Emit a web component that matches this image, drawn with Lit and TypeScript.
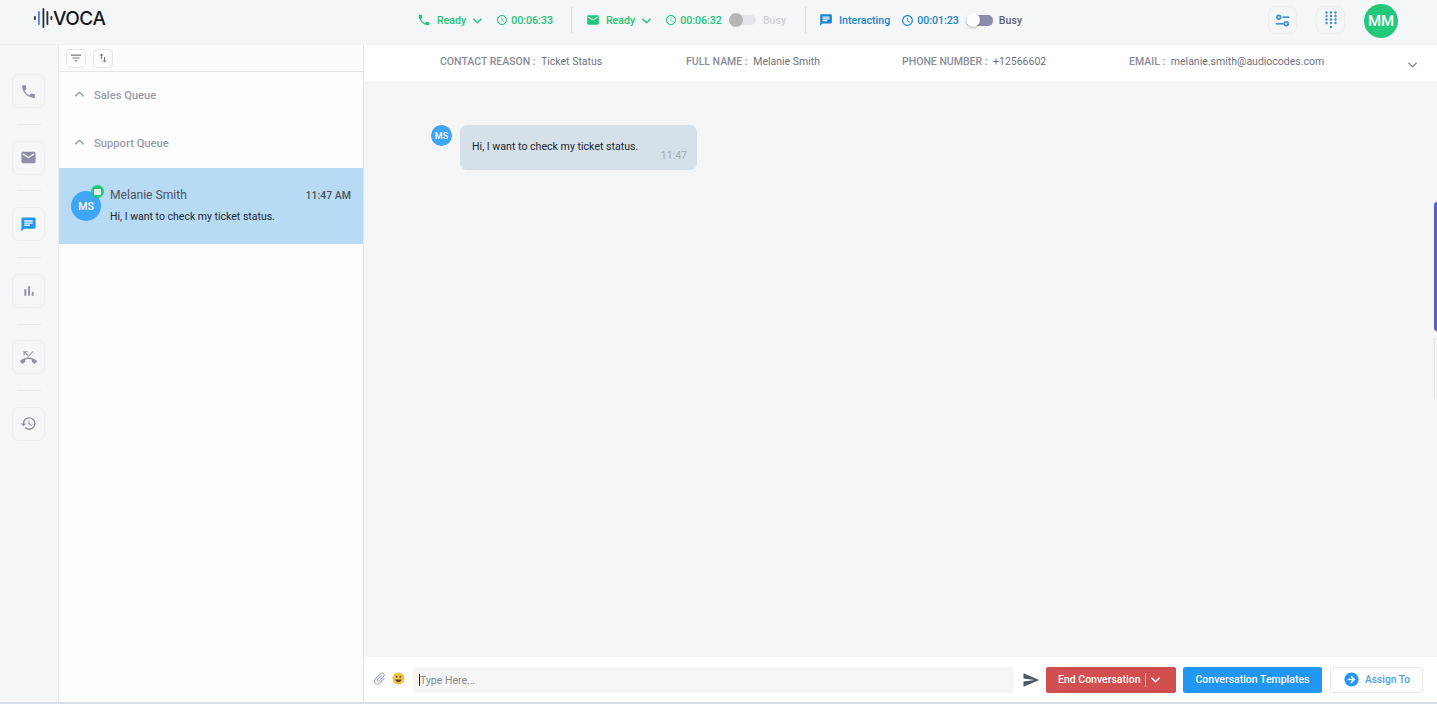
import { LitElement, css, html, svg } from 'lit'
import { customElement } from 'lit/decorators.js'

const icons = {
  phone: 'M6.62 10.79c1.44 2.83 3.76 5.14 6.59 6.59l2.2-2.2c.27-.27.67-.36 1.02-.24 1.12.37 2.33.57 3.57.57.55 0 1 .45 1 1V20c0 .55-.45 1-1 1-9.39 0-17-7.61-17-17 0-.55.45-1 1-1h3.5c.55 0 1 .45 1 1 0 1.25.2 2.45.57 3.57.11.35.03.74-.25 1.02l-2.2 2.2z',
  mail: 'M20 4H4c-1.1 0-1.99.9-1.99 2L2 18c0 1.1.9 2 2 2h16c1.1 0 2-.9 2-2V6c0-1.1-.9-2-2-2zm0 4l-8 5-8-5V6l8 5 8-5v2z',
  chat: 'M20 2H4c-1.1 0-1.99.9-1.99 2L2 22l4-4h14c1.1 0 2-.9 2-2V4c0-1.1-.9-2-2-2zM6 9h12v2H6V9zm8 5H6v-2h8v2zm4-6H6V6h12v2z',
  bars: 'M5 9.2h3V19H5zM10.6 5h2.8v14h-2.8zm5.6 8H19v6h-2.8z',
  clock: 'M11.99 2C6.47 2 2 6.48 2 12s4.47 10 9.99 10C17.52 22 22 17.52 22 12S17.52 2 11.99 2zM12 20c-4.42 0-8-3.58-8-8s3.58-8 8-8 8 3.58 8 8-3.58 8-8 8zm.5-13H11v6l5.25 3.15.75-1.23-4.5-2.67z',
  history: 'M13 3c-4.97 0-9 4.03-9 9H1l3.89 3.89.07.14L9 12H6c0-3.87 3.13-7 7-7s7 3.13 7 7-3.13 7-7 7c-1.93 0-3.68-.79-4.94-2.06l-1.42 1.42C8.27 19.99 10.51 21 13 21c4.97 0 9-4.03 9-9s-4.03-9-9-9zm-1 5v5l4.28 2.54.72-1.21-3.5-2.08V8H12z',
  missed: 'M6.5 5.5L12 11l7-7-1-1-6 6-4.5-4.5H11V3H5v6h1.5V5.5zm17.21 11.17C20.66 13.78 16.54 12 12 12 7.46 12 3.34 13.78.29 16.67c-.18.18-.29.43-.29.71s.11.53.29.71l2.48 2.48c.18.18.43.29.71.29.27 0 .52-.11.7-.28.79-.74 1.69-1.36 2.66-1.85.33-.16.56-.5.56-.9v-3.1c1.45-.48 3-.73 4.6-.73 1.6 0 3.15.25 4.6.72v3.1c0 .39.23.74.56.9.98.49 1.87 1.12 2.67 1.85.18.18.43.28.7.28.28 0 .53-.11.71-.29l2.48-2.48c.18-.18.29-.43.29-.71s-.12-.52-.3-.7z',
  filter: 'M10 18h4v-2h-4v2zM3 6v2h18V6H3zm3 7h12v-2H6v2z',
  sort: 'M16 17.01V10h-2v7.01h-3L15 21l4-3.99h-3zM9 3L5 6.99h3V14h2V6.99h3L9 3z',
  send: 'M2.01 21L23 12 2.01 3 2 10l15 2-15 2z',
  attach: 'M16.5 6v11.5c0 2.21-1.79 4-4 4s-4-1.79-4-4V5c0-1.38 1.12-2.5 2.5-2.5s2.5 1.12 2.5 2.5v10.5c0 .55-.45 1-1 1s-1-.45-1-1V6H10v9.5c0 1.38 1.12 2.5 2.5 2.5s2.5-1.12 2.5-2.5V5c0-2.21-1.79-4-4-4S7 2.79 7 5v12.5c0 3.04 2.46 5.5 5.5 5.5s5.5-2.46 5.5-5.5V6h-1.5z',
  arrow: 'M12 2a10 10 0 1 0 0 20 10 10 0 0 0 0-20zm0 4.5l5.5 5.5-5.5 5.5-1.5-1.5 3-3H6.5v-2h7l-3-3z',
}

const icon = (name: keyof typeof icons, size: number, color: string) => html`
  <svg width=${size} height=${size} viewBox="0 0 24 24" fill=${color} style="flex:none"><path d=${icons[name]}></path></svg>
`

const chevron = (size: number, color: string, up = false) => html`
  <svg width=${size} height=${size} viewBox="0 0 12 12" fill="none" stroke=${color} stroke-width="1.6" style="flex:none;display:block">
    <polyline points=${up ? '1.5,8 6,3.5 10.5,8' : '1.5,4 6,8.5 10.5,4'}></polyline>
  </svg>
`

const navItems: (keyof typeof icons)[] = ['phone', 'mail', 'chat', 'bars', 'missed', 'history']

const contactFields = [
  { label: 'CONTACT REASON', value: 'Ticket Status', width: 246 },
  { label: 'FULL NAME', value: 'Melanie Smith', width: 216 },
  { label: 'PHONE NUMBER', value: '+12566602', width: 227 },
  { label: 'EMAIL', value: 'melanie.smith@audiocodes.com', width: 0 },
]

@customElement('app-root')
export class AppRoot extends LitElement {
  static styles = css`
    :host {
      display: block;
      width: 1437px;
      height: 704px;
      overflow: hidden;
      position: relative;
      background: #f5f6f8;
      font-family: Roboto, "Liberation Sans", sans-serif;
      color: #3c4048;
    }

    .topbar {
      height: 45px;
      padding-bottom: 4px;
      box-sizing: border-box;
      display: flex;
      align-items: center;
      font-size: 10.6px;
      font-weight: 500;
      border-bottom: 1px solid #eef0f3;
    }

    .logo {
      display: flex;
      align-items: center;
      margin-left: 34px;
      width: 383px;
      margin-top: -4px;
      color: #14181f;
    }

    .logo span {
      font-family: Inter, sans-serif;
      font-size: 19px;
      font-weight: 500;
      letter-spacing: -0.5px;
    }

    .status {
      display: flex;
      align-items: center;
      white-space: nowrap;
      color: #22c57a;
    }

    .status.blue { color: #1a86c7; }
    .label { margin-left: 6px; }
    .time { margin-left: 3px; }
    .gap-chev { margin: 0 13px 0 6px; }
    .spacer { width: 11px; }

    .sep {
      width: 1px;
      height: 26px;
      background: #d9dbe0;
      margin: 0 14px 0 18px;
    }

    .sep.second { margin: 0 13px 0 19px; }

    .toggle {
      position: relative;
      width: 27px;
      height: 10px;
      border-radius: 5px;
      background: #e4e5e8;
      margin: 0 7px;
    }

    .knob {
      position: absolute;
      left: 0;
      top: -2px;
      width: 14px;
      height: 14px;
      border-radius: 50%;
      background: #b5b5b5;
    }

    .toggle.on {
      background: #8c8cab;
      height: 11px;
      margin-right: 6px;
    }

    .toggle.on .knob {
      background: #fff;
      box-shadow: 0 1px 2px rgba(0, 0, 0, 0.25);
    }

    .muted { color: #cfd1d6; }
    .dark { color: #5d6270; }

    .top-actions {
      display: flex;
      align-items: center;
      margin-left: auto;
      margin-right: 39px;
      gap: 19px;
    }

    .square {
      width: 29px;
      height: 28px;
      display: flex;
      align-items: center;
      justify-content: center;
      border: 1px solid #eceef1;
      border-radius: 7px;
      box-sizing: border-box;
    }

    .avatar-main {
      width: 34px;
      height: 34px;
      margin-top: 1px;
      border-radius: 50%;
      background: #22c97a;
      color: #fff;
      font-size: 15px;
      display: flex;
      align-items: center;
      justify-content: center;
    }

    .body {
      display: flex;
      height: 659px;
      border-bottom: 2px solid #d7dee8;
      box-sizing: border-box;
    }

    .nav {
      width: 58px;
      flex: none;
      display: flex;
      flex-direction: column;
      align-items: center;
      padding-top: 29px;
      box-sizing: border-box;
    }

    .nav-btn {
      width: 33px;
      height: 34px;
      margin-right: 1px;
      display: flex;
      align-items: center;
      justify-content: center;
      border: 1px solid #eceef2;
      border-radius: 7px;
      box-sizing: border-box;
    }

    .nav-line {
      width: 24px;
      height: 1px;
      background: #e8e9ed;
      margin: 15.8px 1px 15.8px 0;
    }

    .list {
      width: 306px;
      flex: none;
      background: #fdfdfd;
      border-left: 1px solid #e6e8ec;
      border-right: 1px solid #e6e8ec;
      box-sizing: border-box;
    }

    .list-tools {
      height: 27px;
      display: flex;
      align-items: center;
      gap: 7px;
      padding-left: 7px;
      background: #fcfcfc;
      border-bottom: 1px solid #e4e5e8;
      box-sizing: border-box;
    }

    .tool {
      width: 20px;
      height: 19px;
      display: flex;
      align-items: center;
      justify-content: center;
      border: 1px solid #e6e7ea;
      border-radius: 4px;
      box-sizing: border-box;
    }

    .queue {
      height: 48px;
      padding: 0 0 1px 15px;
      box-sizing: border-box;
      display: flex;
      align-items: center;
      gap: 9px;
      font-size: 11.2px;
      font-weight: 500;
      color: #9a9cab;
    }

    .queue svg { margin-top: -3px; }

    .contact {
      position: relative;
      height: 76px;
      background: #b8dbf5;
      padding: 19px 12px 0 51px;
      box-sizing: border-box;
    }

    .contact-head {
      display: flex;
      justify-content: space-between;
      align-items: center;
      height: 16px;
      font-size: 12.1px;
      color: #4a5362;
    }

    .contact-time {
      font-size: 10.5px;
      font-weight: 500;
    }

    .contact-msg {
      margin-top: 7px;
      font-size: 10.5px;
      line-height: 14px;
      color: #20262e;
    }

    .badge-avatar {
      position: absolute;
      left: 12px;
      top: 23px;
      width: 30px;
      height: 30px;
      border-radius: 50%;
      background: #3ea6f5;
      color: #fff;
      font-size: 10.5px;
      font-weight: 500;
      display: flex;
      align-items: center;
      justify-content: center;
    }

    .badge {
      position: absolute;
      right: -3px;
      top: -6px;
      width: 13px;
      height: 13px;
      border-radius: 50%;
      background: #22c97a;
      display: flex;
      align-items: center;
      justify-content: center;
    }

    .badge i {
      width: 7px;
      height: 6px;
      border-radius: 1px;
      background: #e6f7ee;
    }

    .main {
      flex: 1;
      min-width: 0;
      display: flex;
      flex-direction: column;
      background: #f5f5f5;
    }

    .info {
      height: 36px;
      padding: 0 0 3px 76px;
      box-sizing: border-box;
      flex: none;
      display: flex;
      align-items: center;
      background: #fff;
      font-size: 10.5px;
      color: #6f727d;
      position: relative;
    }

    .info b {
      font-weight: 500;
      color: #8b8d9a;
      margin-right: 3px;
    }

    .info-chev {
      position: absolute;
      right: 19px;
      top: 14px;
    }

    .thread {
      flex: 1;
      display: flex;
      align-items: flex-start;
      gap: 8px;
      padding: 44px 0 0 67px;
    }

    .msg-avatar {
      width: 21px;
      height: 21px;
      border-radius: 50%;
      background: #3ea6f5;
      color: #fff;
      font-size: 9px;
      font-weight: 500;
      display: flex;
      align-items: center;
      justify-content: center;
    }

    .bubble {
      width: 237px;
      height: 45px;
      box-sizing: border-box;
      padding: 15px 10px 0 12px;
      background: #d5e0e9;
      border-radius: 7px;
      font-size: 10.6px;
      line-height: 13px;
      color: #24282e;
    }

    .bubble p {
      margin: 0;
    }

    .bubble-time {
      margin-top: -4px;
      text-align: right;
      font-size: 10.5px;
      color: #a4acb3;
    }

    .composer {
      height: 45px;
      flex: none;
      display: flex;
      align-items: center;
      background: #fff;
      padding-left: 8px;
      box-sizing: border-box;
    }

    .emoji {
      width: 13px;
      height: 13px;
      margin: 0 0 2px 5px;
      flex: none;
    }

    .attach {
      transform: rotate(45deg);
      margin-bottom: 2px;
      display: flex;
    }

    .input {
      width: 601px;
      height: 26px;
      margin-left: 8px;
      flex: none;
      display: flex;
      align-items: center;
      padding: 1px 0 0 6px;
      box-sizing: border-box;
      background: #f5f5f5;
      border-radius: 4px;
      font-size: 10.5px;
      color: #85888f;
    }

    .caret {
      width: 1px;
      height: 12px;
      background: #222;
    }

    .send {
      display: flex;
      margin: 0 6px 0 8px;
    }

    .btn {
      height: 26px;
      display: flex;
      align-items: center;
      justify-content: center;
      flex: none;
      box-sizing: border-box;
      border-radius: 2px;
      font-size: 10.5px;
      font-weight: 500;
      color: #fff;
    }

    .btn.end {
      width: 130px;
      background: #d14f4f;
      justify-content: flex-start;
      padding-left: 12px;
    }

    .btn.end i {
      width: 1px;
      height: 14px;
      background: #eda9a9;
      margin: 0 4px 0 5px;
    }

    .btn.tpl {
      width: 139px;
      margin-left: 7px;
      background: #2196f3;
    }

    .btn.assign {
      width: 93px;
      margin-left: 8px;
      gap: 5px;
      background: #fff;
      border: 1px solid #e8eaee;
      color: #4a9fe6;
      font-size: 10.2px;
    }

    .edge {
      position: absolute;
      right: 0;
      top: 202px;
      width: 3px;
      height: 129px;
      background: #5b5fc7;
      border-radius: 3px 0 0 3px;
    }

    .edge-lower {
      position: absolute;
      right: 0;
      top: 338px;
      width: 3px;
      height: 60px;
      border-left: 1px solid #dfe8e4;
      border-top: 1px solid #dfe8e4;
      border-radius: 3px 0 0 0;
      box-sizing: border-box;
    }
  `

  renderLogo() {
    const bars: [number, number, number, string][] = [
      [0, 8, 4, '#2a2e35'],
      [4, 3, 14, '#4f7bd9'],
      [8.5, 0, 20, '#2a2e35'],
      [12.5, 3, 14, '#2a2e35'],
      [16.5, 8, 4, '#2a2e35'],
    ]
    return html`
      <div class="logo">
        <svg width="19" height="20" viewBox="0 0 19 20" style="flex:none">
          ${bars.map(([x, y, h, c]) => svg`<rect x=${x} y=${y} width="1.8" height=${h} rx="0.9" fill=${c}></rect>`)}
        </svg>
        <span>VOCA</span>
      </div>
    `
  }

  render() {
    return html`
      <div class="topbar">
        ${this.renderLogo()}
        <div class="status">
          ${icon('phone', 14, '#22c57a')}
          <span class="label">Ready</span>
          <span class="gap-chev">${chevron(11, '#22c57a')}</span>
          ${icon('clock', 12, '#22c57a')}
          <span class="time">00:06:33</span>
        </div>
        <div class="sep"></div>
        <div class="status">
          ${icon('mail', 14, '#22c57a')}
          <span class="label">Ready</span>
          <span class="gap-chev">${chevron(11, '#22c57a')}</span>
          ${icon('clock', 12, '#22c57a')}
          <span class="time">00:06:32</span>
          <div class="toggle"><div class="knob"></div></div>
          <span class="muted">Busy</span>
        </div>
        <div class="sep second"></div>
        <div class="status blue">
          ${icon('chat', 14, '#1a86c7')}
          <span class="label">Interacting</span>
          <span class="spacer"></span>
          ${icon('clock', 13, '#1a86c7')}
          <span class="time">00:01:23</span>
          <div class="toggle on"><div class="knob"></div></div>
          <span class="dark">Busy</span>
        </div>
        <div class="top-actions">
          <div class="square">
            <svg width="15" height="15" viewBox="0 0 16 16" fill="none" stroke="#3d8fd6" stroke-width="1.8">
              <circle cx="4" cy="4.5" r="2"></circle><line x1="8" y1="4.5" x2="15" y2="4.5"></line>
              <line x1="1" y1="11.5" x2="9" y2="11.5"></line><circle cx="12" cy="11.5" r="2"></circle>
            </svg>
          </div>
          <div class="square">
            <svg width="14" height="18" viewBox="0 0 14 18" fill="#3d8fd6">
              ${[1.5, 5, 8.5, 12].flatMap((y) => [2.5, 7, 11.5].map((x) => svg`<circle cx=${x} cy=${y} r="1.2"></circle>`))}
              <circle cx="7" cy="16" r="1.2"></circle>
            </svg>
          </div>
          <div class="avatar-main">MM</div>
        </div>
      </div>

      <div class="body">
        <div class="nav">
          ${navItems.map((name, i) => html`
            ${i > 0 ? html`<div class="nav-line"></div>` : ''}
            <div class="nav-btn">${icon(name, name === 'bars' ? 16 : 17, name === 'chat' ? '#2196f3' : '#8f90a6')}</div>
          `)}
        </div>

        <div class="list">
          <div class="list-tools">
            <div class="tool">${icon('filter', 14, '#777a85')}</div>
            <div class="tool">${icon('sort', 12, '#777a85')}</div>
          </div>
          <div class="queue">${chevron(11, '#9a9cab', true)}Sales Queue</div>
          <div class="queue">${chevron(11, '#9a9cab', true)}Support Queue</div>
          <div class="contact">
            <div class="badge-avatar">MS<div class="badge"><i></i></div></div>
            <div class="contact-head"><span>Melanie Smith</span><span class="contact-time">11:47 AM</span></div>
            <div class="contact-msg">Hi, I want to check my ticket status.</div>
          </div>
        </div>

        <div class="main">
          <div class="info">
            ${contactFields.map((f) => html`
              <div style=${f.width ? `width:${f.width}px;flex:none` : 'flex:none'}><b>${f.label} :</b> ${f.value}</div>
            `)}
            <div class="info-chev">${chevron(11, '#8b8d9a')}</div>
          </div>
          <div class="thread">
            <div class="msg-avatar">MS</div>
            <div class="bubble">
              <p>Hi, I want to check my ticket status.</p>
              <div class="bubble-time">11:47</div>
            </div>
          </div>
          <div class="composer">
            <span class="attach">${icon('attach', 15, '#9a9abf')}</span>
            <svg class="emoji" viewBox="0 0 14 14">
              <circle cx="7" cy="7" r="6.5" fill="#f0c24b"></circle>
              <circle cx="5" cy="5" r="1" fill="#5b4a1e"></circle><circle cx="9" cy="5" r="1" fill="#5b4a1e"></circle>
              <path d="M3.5 8c.6 2 2 3 3.5 3s2.9-1 3.5-3z" fill="#5b4a1e"></path>
            </svg>
            <div class="input"><span class="caret"></span>Type Here...</div>
            <span class="send">${icon('send', 18, '#4d5663')}</span>
            <div class="btn end">End Conversation<i></i>${chevron(11, '#fff')}</div>
            <div class="btn tpl">Conversation Templates</div>
            <div class="btn assign">${icon('arrow', 17, '#2196f3')}Assign To</div>
          </div>
        </div>
      </div>
      <div class="edge"></div>
      <div class="edge-lower"></div>
    `
  }
}
